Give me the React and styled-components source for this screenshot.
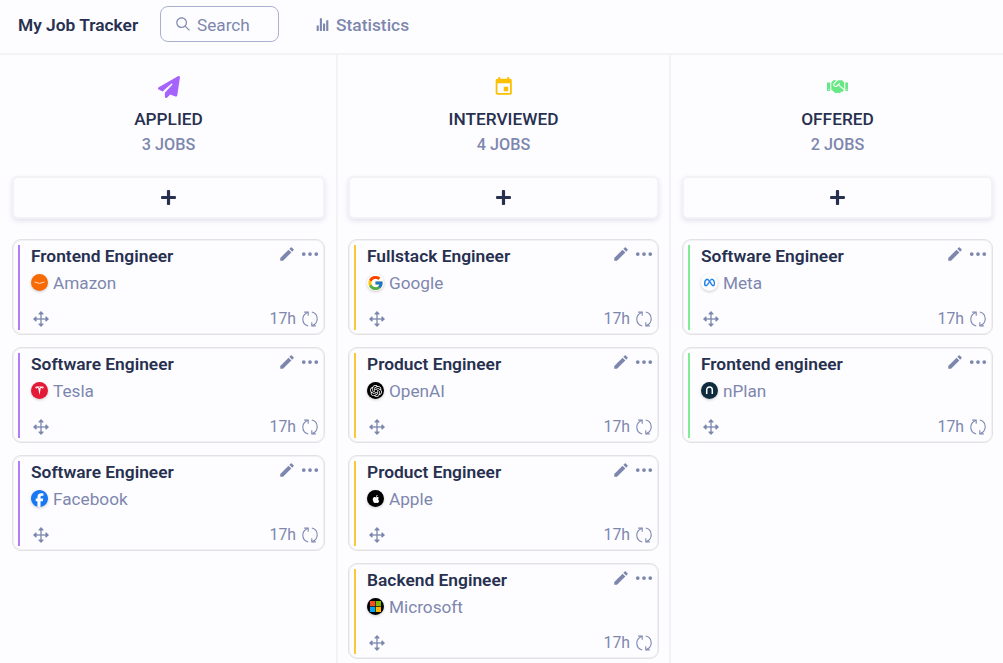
import React from "react";
import styled, { createGlobalStyle } from "styled-components";
import { IoIosStats, IoIosSearch } from "react-icons/io";
import { MdEvent, MdEdit } from "react-icons/md";
import { FaHandshake, FaPlus } from "react-icons/fa";
import { FaPaperPlane } from "react-icons/fa6";
import { BsThreeDots } from "react-icons/bs";
import { SiOpenai, SiTesla, SiApple, SiFacebook, SiMeta } from "react-icons/si";
import { FcGoogle } from "react-icons/fc";

const GlobalStyle = createGlobalStyle`
  *, *::before, *::after { box-sizing: border-box; }
  body { margin: 0; background: #fdfdff; color: #27304f; font-family: Roboto, sans-serif; overflow: hidden; }
`;

const Page = styled.div`
  height: 100vh;
  display: flex;
  flex-direction: column;
  overflow: hidden;
`;

const Header = styled.header`
  height: 55px;
  flex: none;
  display: flex;
  align-items: center;
  padding: 0 18px 5px;
  border-bottom: 2px solid #f3f3f6;
`;

const Brand = styled.h1`
  width: 120px;
  margin: 1px 22px 0 0;
  font-size: 17.35px;
  font-weight: 600;
  line-height: 20px;
  white-space: nowrap;
`;

const SearchBox = styled.div`
  width: 119px;
  height: 36px;
  display: flex;
  align-items: center;
  gap: 5px;
  padding-left: 13px;
  border: 1px solid #aab0cd;
  border-radius: 8px;
  color: #7d87ae;
  font-size: 17.2px;

  span { padding-top: 2px; }
`;

const StatsLink = styled.a`
  display: flex;
  align-items: center;
  gap: 5px;
  margin: 1px 0 0 35px;
  color: #7d87ae;
  font-size: 17.4px;
  font-weight: 500;
`;

const Board = styled.main`
  flex: 1;
  min-height: 0;
  display: grid;
  grid-template-columns: 338px 333px 332px;
`;

const Column = styled.section`
  padding: 20px 10px 0;
  border-right: 2px solid #f3f3f6;
  &:first-child { padding: 20px 11px 0 12px; }
  &:last-child { padding-left: 11px; border-right: 0; }
`;

const ColumnHead = styled.div`
  display: flex;
  flex-direction: column;
  align-items: center;
`;

const Stage = styled.div`
  height: 24px;
  display: flex;
  align-items: center;
  color: ${(p) => p.$color};
`;

const ColumnTitle = styled.h2`
  margin: 8px 0 0;
  font-size: 17.28px;
  font-weight: 500;
  line-height: 25px;
`;

const Count = styled.div`
  color: #7d87ae;
  font-size: 16.2px;
  font-weight: 500;
  line-height: 25px;
`;

const AddButton = styled.button`
  width: 100%;
  height: 43px;
  display: flex;
  align-items: center;
  justify-content: center;
  margin: 19px 0 20px;
  padding: 0;
  border: 2px solid #f3f3f6;
  border-radius: 6px;
  background: #fdfdff;
  color: #27304f;
  box-shadow: 0 2px 5px rgba(60, 60, 130, 0.14);
`;

const CardList = styled.div`
  display: flex;
  flex-direction: column;
  gap: 12px;
`;

const Card = styled.article`
  height: 96px;
  display: flex;
  padding: 4px 4px 4px 5px;
  border: 1px solid #e2e2e6;
  border-radius: 9px;
  box-shadow: inset 0 0 0 1px #f1f1f3;
`;

const Accent = styled.div`
  width: 2px;
  margin: 1px 11px 0 0;
  background: ${(p) => p.$color};
`;

const CardBody = styled.div`
  flex: 1;
  display: flex;
  flex-direction: column;
`;

const Row = styled.div`
  display: flex;
  align-items: center;
  justify-content: space-between;
`;

const JobTitle = styled.h3`
  margin: 0;
  font-size: 17.38px;
  font-weight: 600;
  line-height: 25px;
`;

const Actions = styled.div`
  display: flex;
  align-items: center;
  gap: 4px;
  padding-bottom: 5px;
  color: #7d87ae;
`;

const Updated = styled.div`
  display: flex;
  align-items: center;
  gap: 6px;
  padding-right: 2px;
  font-size: 15.8px;

  svg { margin-top: 1px; }
`;

const Company = styled.div`
  display: flex;
  align-items: center;
  gap: 5px;
  color: #7d87ae;
  font-size: 17.2px;
  line-height: 27px;

  strong { padding-top: 2px; font-weight: 400; line-height: 25px; }
`;

const Logo = styled.span`
  width: 17px;
  height: 17px;
  display: flex;
  align-items: center;
  justify-content: center;
  border-radius: 50%;
  background: ${(p) => p.$bg};
  color: ${(p) => p.$fg || "#fff"};
  box-shadow: 0 1px 3px rgba(0, 0, 0, 0.2);
`;

const Foot = styled(Row)`
  margin-top: auto;
  height: 24px;
  padding: 1px 0 0 2px;
  color: #7d87ae;
`;

function MoveIcon() {
  return (
    <svg width="16" height="16" viewBox="0 0 16 16" fill="currentColor">
      <path d="M7.35 2h1.3v12h-1.3z" />
      <path d="M2 7.35h12v1.3H2z" />
      <path d="M8 0l2.8 2.9-.7.7H5.9l-.7-.7z" />
      <path d="M8 16l2.8-2.9-.7-.7H5.9l-.7.7z" />
      <path d="M0 8l2.9-2.8.7.7v4.2l-.7.7z" />
      <path d="M16 8l-2.9-2.8-.7.7v4.2l.7.7z" />
    </svg>
  );
}

function RefreshIcon() {
  return (
    <svg width="16" height="16" viewBox="0 0 16 16" fill="none" stroke="currentColor" strokeWidth="1.1">
      <path d="M5.8 1.4C2.6 2.6.8 5 .8 8c0 3.4 2.2 6.2 5.4 7" />
      <path d="M2.2 1.1h4v3.6" />
      <path d="M10.2 14.6c3.2-1.2 5-3.6 5-6.6 0-3.4-2.2-6.2-5.4-7" />
      <path d="M13.8 14.9h-4v-3.6" />
    </svg>
  );
}

const logos = {
  Amazon: <Logo $bg="#f76b07"><svg width="17" height="17" viewBox="0 0 17 17" fill="none" stroke="#ffd9bd" strokeWidth="1"><path d="M3.5 8Q8.5 10.8 13.5 8" /></svg></Logo>,
  Tesla: <Logo $bg="#e31937"><SiTesla size={9} /></Logo>,
  Facebook: <Logo $bg="#fff" $fg="#1877f2"><SiFacebook size={17} /></Logo>,
  Google: <Logo $bg="#fff"><FcGoogle size={18} /></Logo>,
  OpenAI: <Logo $bg="#000"><SiOpenai size={12} /></Logo>,
  Apple: <Logo $bg="#000"><SiApple size={8} /></Logo>,
  Microsoft: <Logo $bg="#000"><svg width="11" height="11" viewBox="0 0 11 11"><path fill="#f25022" d="M0 0h5.2v5.2H0z" /><path fill="#7fba00" d="M5.8 0H11v5.2H5.8z" /><path fill="#00a4ef" d="M0 5.8h5.2V11H0z" /><path fill="#ffb900" d="M5.8 5.8H11V11H5.8z" /></svg></Logo>,
  Meta: <Logo $bg="#fff" $fg="#1b7fe8"><SiMeta size={11} strokeWidth={0.8} stroke="currentColor" /></Logo>,
  nPlan: <Logo $bg="#0f2c3f"><svg width="17" height="17" viewBox="0 0 17 17" fill="none" stroke="#fff" strokeWidth="1.5"><path d="M5.7 12V7.7a2.8 2.8 0 0 1 5.6 0V12" /></svg></Logo>,
};

const columns = [
  {
    name: "APPLIED", color: "#a663fc", accent: "#b27cf9", icon: <FaPaperPlane size={22} />,
    jobs: [["Frontend Engineer", "Amazon"], ["Software Engineer", "Tesla"], ["Software Engineer", "Facebook"]],
  },
  {
    name: "INTERVIEWED", color: "#fcc003", accent: "#fcc83a", icon: <MdEvent size={21.5} />,
    jobs: [["Fullstack Engineer", "Google"], ["Product Engineer", "OpenAI"], ["Product Engineer", "Apple"], ["Backend Engineer", "Microsoft"]],
  },
  {
    name: "OFFERED", color: "#68e884", accent: "#80ec95", icon: <FaHandshake size={21.5} />,
    jobs: [["Software Engineer", "Meta"], ["Frontend engineer", "nPlan"]],
  },
];

export default function App() {
  return (
    <Page>
      <GlobalStyle />
      <Header>
        <Brand>My Job Tracker</Brand>
        <SearchBox><IoIosSearch size={18} /><span>Search</span></SearchBox>
        <StatsLink><IoIosStats size={17} />Statistics</StatsLink>
      </Header>
      <Board>
        {columns.map((c) => (
          <Column key={c.name}>
            <ColumnHead>
              <Stage $color={c.color}>{c.icon}</Stage>
              <ColumnTitle>{c.name}</ColumnTitle>
              <Count>{c.jobs.length} JOBS</Count>
            </ColumnHead>
            <AddButton aria-label="Add job"><FaPlus size={17} /></AddButton>
            <CardList>
              {c.jobs.map(([title, company]) => (
                <Card key={company}>
                  <Accent $color={c.accent} />
                  <CardBody>
                    <Row>
                      <JobTitle>{title}</JobTitle>
                      <Actions><MdEdit size={18} /><BsThreeDots size={20} /></Actions>
                    </Row>
                    <Company>{logos[company]}<strong>{company}</strong></Company>
                    <Foot><MoveIcon /><Updated>17h<RefreshIcon /></Updated></Foot>
                  </CardBody>
                </Card>
              ))}
            </CardList>
          </Column>
        ))}
      </Board>
    </Page>
  );
}
